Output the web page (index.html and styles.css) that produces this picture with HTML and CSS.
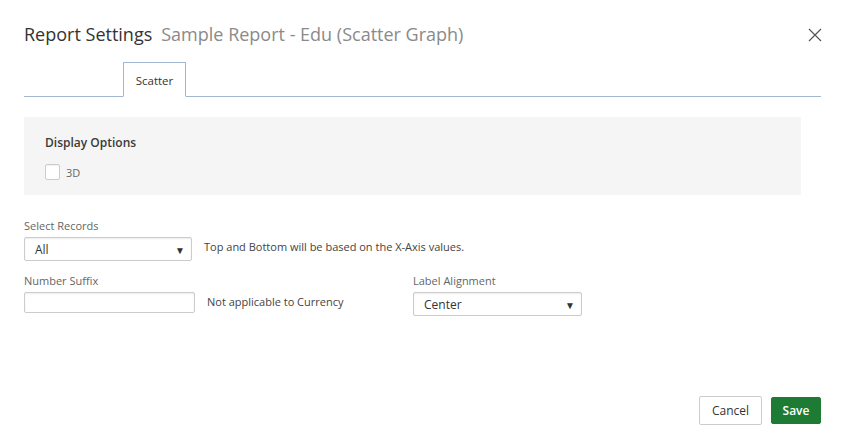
FILE: index.html
```html
<!DOCTYPE html>
<html>
<head>
<meta charset="utf-8">
<link rel="stylesheet" href="styles.css">
</head>
<body>
<div class="dialog">
  <div class="header">
    <div class="title"><span class="main">Report Settings</span><span class="sub">Sample Report - Edu (Scatter Graph)</span></div>
    <button class="close" aria-label="Close"><svg width="14" height="14" viewBox="0 0 14 14"><path d="M1 1L13 13M13 1L1 13" stroke="#555" stroke-width="1.2" fill="none"/></svg></button>
  </div>
  <div class="tabs">
    <div class="tab-spacer"></div>
    <div class="tab active">Scatter</div>
  </div>
  <div class="panel">
    <div class="panel-title">Display Options</div>
    <label class="check"><span class="box"></span><span>3D</span></label>
  </div>
  <div class="field">
    <div class="label">Select Records</div>
    <div class="row">
      <div class="select sel-records"><span>All</span><span class="arrow">&#9660;</span></div>
      <div class="hint">Top and Bottom will be based on the X-Axis values.</div>
    </div>
  </div>
  <div class="field-row">
    <div class="field">
      <div class="label">Number Suffix</div>
      <div class="row">
        <div class="input"></div>
        <div class="hint hint2">Not applicable to Currency</div>
      </div>
    </div>
    <div class="field">
      <div class="label">Label Alignment</div>
      <div class="select sel-align"><span>Center</span><span class="arrow">&#9660;</span></div>
    </div>
  </div>
  <div class="footer">
    <button class="btn cancel">Cancel</button>
    <button class="btn save">Save</button>
  </div>
</div>
</body>
</html>
```

FILE: styles.css
```css
* { box-sizing: border-box; }
html, body { margin: 0; padding: 0; background: #fff; }
body { font-family: "Open Sans", "Noto Sans", sans-serif; color: #333; width: 846px; height: 441px; overflow: hidden; }
.dialog { padding: 22px 24px 0 24px; width: 846px; }
.header { display: flex; justify-content: space-between; align-items: center; height: 24px; width: 798px; }
.title { font-size: 18px; line-height: 24px; }
.title .main { color: #333; }
.title .sub { color: #8a8a8a; margin-left: 9px; }
.close { border: 0; background: none; padding: 0; width: 14px; height: 14px; display: flex; margin-top: 1px; cursor: pointer; }
.tabs { display: flex; margin-top: 16px; border-bottom: 1px solid #a3b6d0; width: 797px; height: 35px; }
.tab-spacer { width: 99px; }
.tab { width: 63px; height: 35px; border: 1px solid #a3b6d0; border-bottom: 1px solid #fff; background: #fff; font-size: 11.5px; display: flex; align-items: center; justify-content: center; padding-top: 1px; color: #333; }
.panel { margin-top: 20px; width: 777px; height: 78px; background: #f5f5f5; padding: 17px 21px 0; }
.panel-title { font-size: 12px; font-weight: 600; line-height: 18px; color: #3a3a3a; }
.check { display: flex; align-items: center; gap: 6px; margin-top: 12px; font-size: 11px; color: #666; }
.box { width: 15px; height: 16px; border: 1px solid #ccc; border-radius: 2px; background: #fff; box-shadow: inset 0 1px 1px rgba(0,0,0,0.06); }
.field { margin-top: 23px; }
.label { font-size: 11px; line-height: 16px; color: #666; }
.row { display: flex; align-items: center; margin-top: 3px; }
.select { display: flex; justify-content: space-between; align-items: center; border: 1px solid #ccc; border-radius: 2px; background: #fff; font-size: 12px; color: #333; padding: 1px 6px 0 10px; box-shadow: inset 0 1px 2px rgba(0,0,0,0.08); }
.select .arrow { font-size: 10px; color: #333; }
.sel-records { width: 168px; height: 24px; }
.hint { font-size: 11px; color: #444; margin-left: 12px; margin-top: -6px; }
.hint2 { margin-left: 12px; margin-top: -3px; }
.input { width: 171px; height: 21px; border: 1px solid #ccc; border-radius: 2px; box-shadow: inset 0 1px 2px rgba(0,0,0,0.08); }
.field-row { display: flex; gap: 0; }
.field-row .field { margin-top: 12px; }
.field-row .field:first-child { width: 389px; }
.sel-align { width: 169px; height: 24px; margin-top: 3px; }
.footer { display: flex; justify-content: flex-end; gap: 9px; margin-top: 80px; width: 797px; }
.btn { font-family: "Open Sans", "Noto Sans", sans-serif; font-size: 12px; border-radius: 2px; padding: 0; cursor: pointer; }
.cancel { width: 63px; height: 29px; background: #fff; border: 1px solid #ccc; color: #333; }
.save { width: 50px; height: 27px; margin-top: 1px; background: #1e7b34; border: 1px solid #1e7b34; color: #fff; font-weight: 600; }
```
